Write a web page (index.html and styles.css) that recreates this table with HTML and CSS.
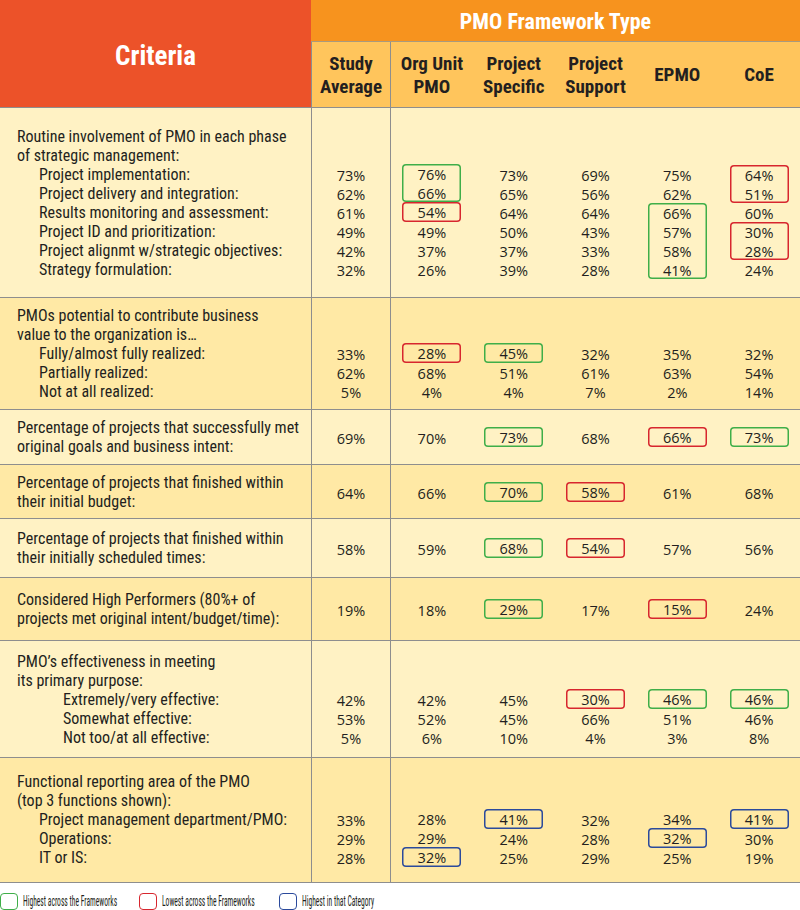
FILE: index.html
```html
<!DOCTYPE html>
<html>
<head>
<meta charset="utf-8">
<link rel="stylesheet" href="styles.css">
</head>
<body>
<div class="table">
  <div class="head">
    <div class="crit-head">Criteria</div>
    <div class="fw">
      <div class="fw-title">PMO Framework Type</div>
      <div class="cols">
        <div class="col avgcol">Study<br>Average</div>
        <div class="col">Org Unit<br>PMO</div>
        <div class="col">Project<br>Specific</div>
        <div class="col">Project<br>Support</div>
        <div class="col">EPMO</div>
        <div class="col">CoE</div>
      </div>
    </div>
  </div>

  <!-- Section 1 -->
  <div class="sec light s1">
    <div class="crit">
      <div>Routine involvement of PMO in each phase</div>
      <div>of strategic management:</div>
      <div class="sub">Project implementation:</div>
      <div class="sub">Project delivery and integration:</div>
      <div class="sub">Results monitoring and assessment:</div>
      <div class="sub">Project ID and prioritization:</div>
      <div class="sub">Project alignmt w/strategic objectives:</div>
      <div class="sub">Strategy formulation:</div>
    </div>
    <div class="vc avg"><div class="v">73%</div><div class="v">62%</div><div class="v">61%</div><div class="v">49%</div><div class="v">42%</div><div class="v">32%</div></div>
    <div class="vc"><div class="box g"><div class="v">76%</div><div class="v">66%</div></div><div class="v box r">54%</div><div class="v">49%</div><div class="v">37%</div><div class="v">26%</div></div>
    <div class="vc"><div class="v">73%</div><div class="v">65%</div><div class="v">64%</div><div class="v">50%</div><div class="v">37%</div><div class="v">39%</div></div>
    <div class="vc"><div class="v">69%</div><div class="v">56%</div><div class="v">64%</div><div class="v">43%</div><div class="v">33%</div><div class="v">28%</div></div>
    <div class="vc"><div class="v">75%</div><div class="v">62%</div><div class="box g"><div class="v">66%</div><div class="v">57%</div><div class="v">58%</div><div class="v">41%</div></div></div>
    <div class="vc"><div class="box r"><div class="v">64%</div><div class="v">51%</div></div><div class="v">60%</div><div class="box r"><div class="v">30%</div><div class="v">28%</div></div><div class="v">24%</div></div>
  </div>

  <!-- Section 2 -->
  <div class="sec dark s2">
    <div class="crit">
      <div>PMOs potential to contribute business</div>
      <div>value to the organization is…</div>
      <div class="sub">Fully/almost fully realized:</div>
      <div class="sub">Partially realized:</div>
      <div class="sub">Not at all realized:</div>
    </div>
    <div class="vc avg"><div class="v">33%</div><div class="v">62%</div><div class="v">5%</div></div>
    <div class="vc"><div class="v box r">28%</div><div class="v">68%</div><div class="v">4%</div></div>
    <div class="vc"><div class="v box g">45%</div><div class="v">51%</div><div class="v">4%</div></div>
    <div class="vc"><div class="v">32%</div><div class="v">61%</div><div class="v">7%</div></div>
    <div class="vc"><div class="v">35%</div><div class="v">63%</div><div class="v">2%</div></div>
    <div class="vc"><div class="v">32%</div><div class="v">54%</div><div class="v">14%</div></div>
  </div>

  <!-- Section 3 -->
  <div class="sec light single s3">
    <div class="crit">
      <div>Percentage of projects that successfully met</div>
      <div>original goals and business intent:</div>
    </div>
    <div class="vc avg"><div class="v">69%</div></div>
    <div class="vc"><div class="v">70%</div></div>
    <div class="vc"><div class="v box g">73%</div></div>
    <div class="vc"><div class="v">68%</div></div>
    <div class="vc"><div class="v box r">66%</div></div>
    <div class="vc"><div class="v box g">73%</div></div>
  </div>

  <!-- Section 4 -->
  <div class="sec dark single s4">
    <div class="crit">
      <div>Percentage of projects that finished within</div>
      <div>their initial budget:</div>
    </div>
    <div class="vc avg"><div class="v">64%</div></div>
    <div class="vc"><div class="v">66%</div></div>
    <div class="vc"><div class="v box g">70%</div></div>
    <div class="vc"><div class="v box r">58%</div></div>
    <div class="vc"><div class="v">61%</div></div>
    <div class="vc"><div class="v">68%</div></div>
  </div>

  <!-- Section 5 -->
  <div class="sec light single s5">
    <div class="crit">
      <div>Percentage of projects that finished within</div>
      <div>their initially scheduled times:</div>
    </div>
    <div class="vc avg"><div class="v">58%</div></div>
    <div class="vc"><div class="v">59%</div></div>
    <div class="vc"><div class="v box g">68%</div></div>
    <div class="vc"><div class="v box r">54%</div></div>
    <div class="vc"><div class="v">57%</div></div>
    <div class="vc"><div class="v">56%</div></div>
  </div>

  <!-- Section 6 -->
  <div class="sec dark single s6">
    <div class="crit">
      <div>Considered High Performers (80%+ of</div>
      <div>projects met original intent/budget/time):</div>
    </div>
    <div class="vc avg"><div class="v">19%</div></div>
    <div class="vc"><div class="v">18%</div></div>
    <div class="vc"><div class="v box g">29%</div></div>
    <div class="vc"><div class="v">17%</div></div>
    <div class="vc"><div class="v box r">15%</div></div>
    <div class="vc"><div class="v">24%</div></div>
  </div>

  <!-- Section 7 -->
  <div class="sec light s7">
    <div class="crit">
      <div>PMO’s effectiveness in meeting</div>
      <div>its primary purpose:</div>
      <div class="sub2">Extremely/very effective:</div>
      <div class="sub2">Somewhat effective:</div>
      <div class="sub2">Not too/at all effective:</div>
    </div>
    <div class="vc avg"><div class="v">42%</div><div class="v">53%</div><div class="v">5%</div></div>
    <div class="vc"><div class="v">42%</div><div class="v">52%</div><div class="v">6%</div></div>
    <div class="vc"><div class="v">45%</div><div class="v">45%</div><div class="v">10%</div></div>
    <div class="vc"><div class="v box r">30%</div><div class="v">66%</div><div class="v">4%</div></div>
    <div class="vc"><div class="v box g">46%</div><div class="v">51%</div><div class="v">3%</div></div>
    <div class="vc"><div class="v box g">46%</div><div class="v">46%</div><div class="v">8%</div></div>
  </div>

  <!-- Section 8 -->
  <div class="sec dark s8">
    <div class="crit">
      <div>Functional reporting area of the PMO</div>
      <div>(top 3 functions shown):</div>
      <div class="sub">Project management department/PMO:</div>
      <div class="sub">Operations:</div>
      <div class="sub">IT or IS:</div>
    </div>
    <div class="vc avg"><div class="v">33%</div><div class="v">29%</div><div class="v">28%</div></div>
    <div class="vc"><div class="v">28%</div><div class="v">29%</div><div class="v box b">32%</div></div>
    <div class="vc"><div class="v box b">41%</div><div class="v">24%</div><div class="v">25%</div></div>
    <div class="vc"><div class="v">32%</div><div class="v">28%</div><div class="v">29%</div></div>
    <div class="vc"><div class="v">34%</div><div class="v box b">32%</div><div class="v">25%</div></div>
    <div class="vc"><div class="v box b">41%</div><div class="v">30%</div><div class="v">19%</div></div>
  </div>

  <div class="legend">
    <div class="lg"><span class="sw g"></span><span class="lt">Highest across the Frameworks</span></div>
    <div class="lg"><span class="sw r"></span><span class="lt">Lowest across the Frameworks</span></div>
    <div class="lg"><span class="sw b"></span><span class="lt">Highest in that Category</span></div>
  </div>
</div>
</body>
</html>
```

FILE: styles.css
```css
* { box-sizing: border-box; }
html, body { margin: 0; padding: 0; background: #ffffff; }
body { width: 800px; height: 910px; overflow: hidden; color: #231f20; }

.table { width: 800px; }

.head { display: flex; height: 107px; }
.crit-head {
  width: 311px;
  background: #ec5229;
  color: #ffffff;
  font-family: "Roboto", sans-serif;
  font-stretch: 75%;
  font-weight: bold;
  font-size: 27px;
  display: flex;
  align-items: center;
  justify-content: center;
  padding-top: 5px;
}
.fw { flex: 1; display: flex; flex-direction: column; }
.fw-title {
  height: 41px;
  background: #f7931e;
  color: #ffffff;
  font-family: "Roboto", sans-serif;
  font-stretch: 75%;
  font-weight: bold;
  font-size: 22px;
  display: flex;
  align-items: center;
  justify-content: center;
  padding-top: 1px;
}
.cols {
  flex: 1;
  display: grid;
  grid-template-columns: 80px repeat(5, 1fr);
  background: #ffc55c;
  border-top: 1px solid #a99a7e;
}
.col {
  display: flex;
  align-items: center;
  justify-content: center;
  text-align: center;
  font-family: "Roboto", sans-serif;
  font-stretch: 75%;
  font-weight: bold;
  font-size: 19px;
  line-height: 23px;
  color: #231f20;
}
.avgcol { border-left: 1px solid #8e8e8e; border-right: 1px solid #8e8e8e; }

.sec {
  display: grid;
  grid-template-columns: 311px 80px repeat(5, 1fr);
  border-top: 1px solid #8e8e8e;
}
.light { background: #fff2c4; }
.dark { background: #ffe9a5; }

.crit {
  padding-left: 17px;
  font-family: "Roboto", sans-serif;
  font-stretch: 82%;
  font-size: 16px;
  line-height: 19px;
  color: #231f20;
  white-space: nowrap;
}
.sub { padding-left: 22px; }
.sub2 { padding-left: 46px; }

.vc {
  display: flex;
  flex-direction: column;
  justify-content: flex-end;
  align-items: center;
}
.single .vc { justify-content: center; }
.avg { border-left: 1px solid #8e8e8e; border-right: 1px solid #8e8e8e; }

.v {
  width: 59px;
  height: 19px;
  line-height: 22px;
  text-align: center;
  font-family: "Open Sans", "Noto Sans", sans-serif;
  font-size: 14.5px;
  color: #231f20;
}
.box { border-radius: 4px; width: 59px; }
.v.box { height: 20px; line-height: 22px; }
.box.g { box-shadow: inset 0 0 0 1.5px #3fae49; }
.box.r { box-shadow: inset 0 0 0 1.5px #d7262e; }
.box.b { box-shadow: inset 0 0 0 1.5px #2b4a9c; }

.s1 > * { padding-top: 19px; padding-bottom: 18px; }
.s2 > * { padding-top: 8px; padding-bottom: 8px; }
.s3 > * { padding-top: 8px; padding-bottom: 8px; }
.s4 > * { padding-top: 8px; padding-bottom: 7px; }
.s5 > * { padding-top: 10px; padding-bottom: 10px; }
.s6 > * { padding-top: 12px; padding-bottom: 12px; }
.s7 > * { padding-top: 11px; padding-bottom: 10px; }
.s8 > * { padding-top: 14px; padding-bottom: 15px; }

.legend {
  display: grid;
  grid-template-columns: 139px 140px auto;
  align-items: center;
  height: 28px;
  padding-top: 9px;
  background: #ffffff;
  border-top: 1px solid #8e8e8e;
}
.lg {
  display: flex;
  align-items: center;
  gap: 5px;
  white-space: nowrap;
  font-family: "Roboto", sans-serif;
  font-stretch: 75%;
  font-size: 14px;
  color: #231f20;
}
.lt {
  display: inline-block;
  transform: scaleX(0.54);
  transform-origin: left center;
}
.sw {
  display: inline-block;
  flex: none;
  width: 18px;
  height: 17px;
  border-radius: 4px;
}
.sw.g { border: 1.5px solid #3fae49; }
.sw.r { border: 1.5px solid #d7262e; }
.sw.b { border: 1.5px solid #2b4a9c; }
```
